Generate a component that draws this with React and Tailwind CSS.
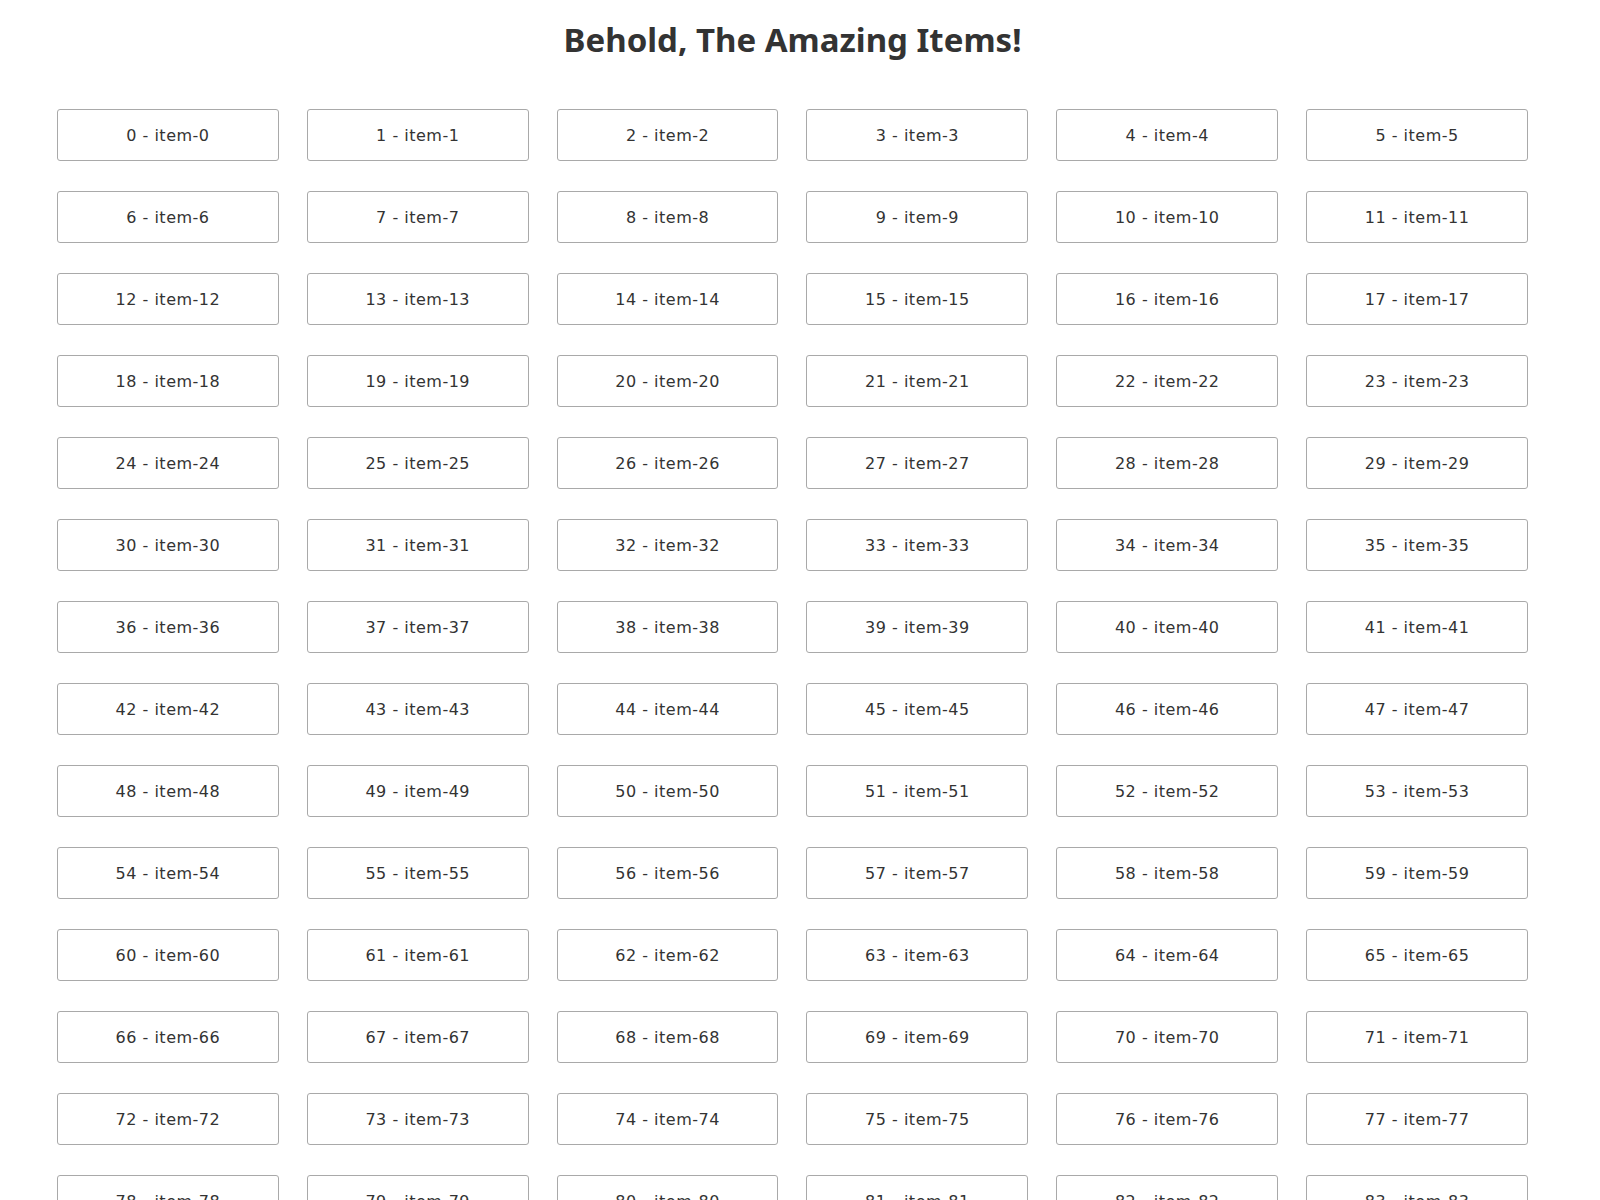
const items = Array.from({ length: 100 }, (_, i) => ({ id: i, name: `item-${i}` }));

const ItemCard = ({ item }) => (
  <div className="flex h-[52px] items-center justify-center rounded-[3px] border border-[#a9a9a9] bg-white pt-[2px] text-[16px] tracking-[0.5px] text-[#333]">
    {item.id} - {item.name}
  </div>
);

export default function App() {
  return (
    <div className="min-h-screen bg-white font-['DejaVu_Sans',sans-serif]">
      {/* page area beside the browser's 15px scrollbar */}
      <div className="w-[1585px]">
        <h1 className="pt-[20px] text-center font-['Noto_Sans',sans-serif] text-[33px] font-bold leading-[40px] text-[#333]">
          Behold, The Amazing Items!
        </h1>
        <div className="mt-[49px] grid grid-cols-6 gap-x-[28px] gap-y-[30px] px-[57px] pb-[40px]">
          {items.map((item) => (
            <ItemCard key={item.id} item={item} />
          ))}
        </div>
      </div>
    </div>
  );
}
